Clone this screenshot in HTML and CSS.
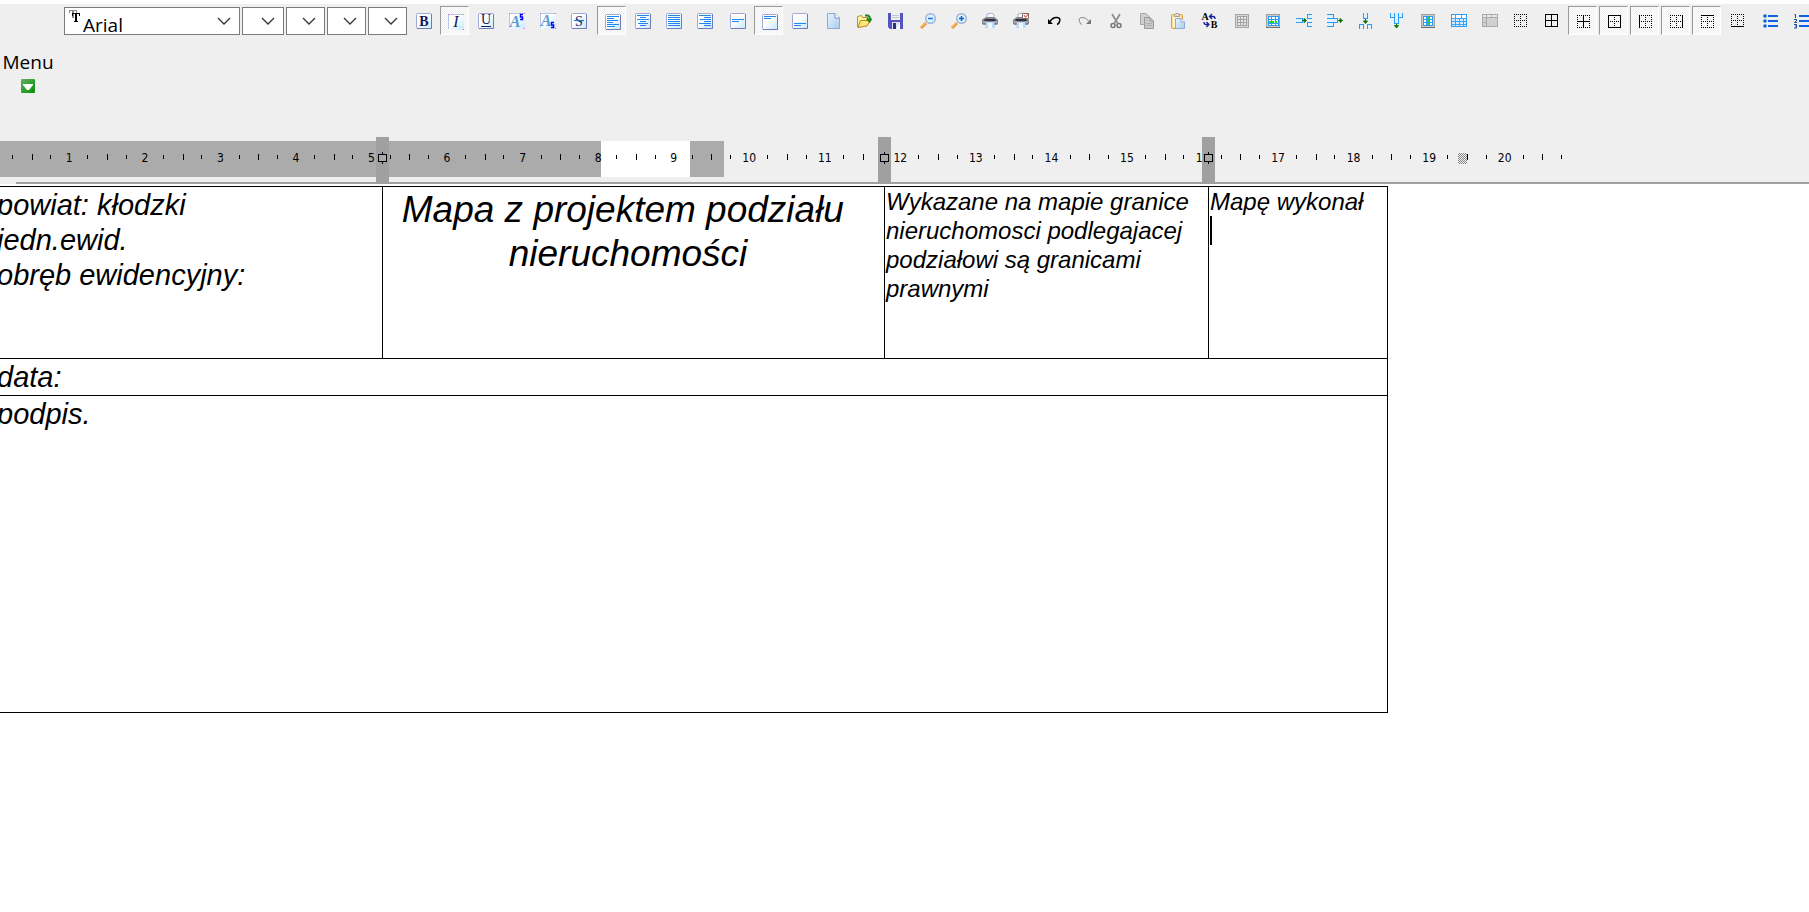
FILE: index.html
```html
<!DOCTYPE html>
<html lang="pl">
<head>
<meta charset="utf-8">
<title>Edytor tabeli</title>
<link rel="stylesheet" href="styles.css">
</head>
<body>
<svg class="defs" aria-hidden="true">
  <defs>
    <linearGradient id="sheen" x1="0" y1="0" x2="1" y2="1"><stop offset="0.4" stop-color="#fff"/><stop offset="1" stop-color="#c3e8fb"/></linearGradient>
    <linearGradient id="page" x1="0" y1="0" x2="1" y2="1"><stop offset="0" stop-color="#e9f3fc"/><stop offset="1" stop-color="#a9cdee"/></linearGradient>
    <linearGradient id="leaf" x1="0" y1="0" x2="1" y2="1"><stop offset="0" stop-color="#5fae5f"/><stop offset="1" stop-color="#0a8f0a"/></linearGradient>
    <g id="box"><rect x="0.5" y="0.5" width="15" height="15" rx="1" fill="url(#sheen)" stroke="#a3a9d6"/><path d="M1 15.5H15.5V1" fill="none" stroke="#7478b4"/></g>
    <g id="faint"><rect x="0" y="0" width="16" height="16" fill="url(#sheen)"/><path d="M1 .5H15M.5 1V15" stroke="#b9c6e6"/><path d="M0 0h1v1H0zM15 0h1v1h-1zM15 15h1v1h-1z" fill="#e25be0"/></g>
    <g id="dots" fill="none" stroke="#000" stroke-dasharray="1 1"><path d="M1 1.500H14M1 7.500H14M1 13.500H14M1.500 1V14M7.500 1V14M13.500 1V14"/></g>
    <g id="glass"><path d="M1 15L6 10" stroke="#ef9a3c" stroke-width="3"/><path d="M1 14L5 10" stroke="#ffc170"/><circle cx="10.500" cy="5.500" r="4.800" fill="#d8f3ff" stroke="#9db4dc" stroke-width="1.500"/></g>
    <g id="printer"><path d="M5 6V1l5-1 2 2v4z" fill="#f4f9ff" stroke="#98a3c4" stroke-width=".8"/><path d="M1 6l3-2h8l3 2 1 1v4l-2 1H2l-2-1V7z" fill="#85838f"/><path d="M3 6h10l1 2H2z" fill="#34323e"/><path d="M1 9h3M12 9h3" stroke="#c9c8d2"/><path d="M4 9h8l1 6H3z" fill="#b9dcf8"/><path d="M6 10h4v5H6z" fill="#eef8ff"/></g>
  </defs>
</svg>

<header class="panel">
  <div class="toolbar">
    <div class="combo combo-font">
      <svg class="combo-mark" viewBox="0 0 12 13" shape-rendering="crispEdges"><path d="M0 0h8v3H7V1H5v7H3V1H1v2H0z" fill="#8a8a8a"/><path d="M3 3h8v3h-1V4H8v7h1v1H5v-1h1V4H4v2H3z" fill="#000"/></svg>
      <select aria-label="Czcionka"><option>Arial</option></select>
      <svg class="chevron" viewBox="0 0 14 8"><path d="M1 1l6 6 6-6"/></svg>
    </div>
    <div class="combo combo-size"><select aria-label="Rozmiar"><option></option></select><svg class="chevron" viewBox="0 0 14 8"><path d="M1 1l6 6 6-6"/></svg></div>
    <div class="combo"><select aria-label="Kolor"><option></option></select><svg class="chevron" viewBox="0 0 14 8"><path d="M1 1l6 6 6-6"/></svg></div>
    <div class="combo"><select aria-label="Tło"><option></option></select><svg class="chevron" viewBox="0 0 14 8"><path d="M1 1l6 6 6-6"/></svg></div>
    <div class="combo"><select aria-label="Styl"><option></option></select><svg class="chevron" viewBox="0 0 14 8"><path d="M1 1l6 6 6-6"/></svg></div>

    <div class="group">
      <button class="tool" aria-label="Pogrubienie"><svg viewBox="0 0 16 16"><use href="#box"/><text x="8" y="13" class="glyph">B</text></svg></button>
      <button class="tool pressed" aria-label="Kursywa"><svg viewBox="0 0 16 16"><use href="#faint"/><text x="8" y="13" class="glyph slant plain">I</text></svg></button>
      <button class="tool" aria-label="Podkreślenie"><svg viewBox="0 0 16 16"><use href="#box"/><text x="8" y="11" class="glyph plain">U</text><path d="M3 13.500H13" stroke="#23235c"/></svg></button>
      <button class="tool" aria-label="Indeks górny"><svg viewBox="0 0 16 16"><use href="#faint"/><text x="6" y="14" class="glyph slant sky">A</text><path d="M14 1.500H11.500V4H13.500V6.500H11" class="five"/></svg></button>
      <button class="tool" aria-label="Indeks dolny"><svg viewBox="0 0 16 16"><use href="#faint"/><text x="6" y="13" class="glyph slant sky">A</text><path d="M14 9.500H11.500V12H13.500V14.500H11" class="five"/></svg></button>
      <button class="tool" aria-label="Przekreślenie"><svg viewBox="0 0 16 16"><use href="#box"/><text x="8" y="13" class="glyph plain">S</text><path d="M3 7.500H13" stroke="#1c7ac8" stroke-width="1.200"/></svg></button>
    </div>
    <div class="group">
      <button class="tool pressed" aria-label="Do lewej"><svg viewBox="0 0 16 16"><use href="#box"/><path class="lines" d="M2 2.500H14M2 4.500H9M2 6.500H13M2 8.500H8M2 10.500H14M2 12.500H10"/></svg></button>
      <button class="tool" aria-label="Do środka"><svg viewBox="0 0 16 16"><use href="#box"/><path class="lines" d="M2 2.500H14M5 4.500H11M2 6.500H14M5 8.500H11M3 10.500H13M5 12.500H11"/></svg></button>
      <button class="tool" aria-label="Wyjustuj"><svg viewBox="0 0 16 16"><use href="#box"/><path class="lines" d="M2 2.500H14M2 4.500H14M2 6.500H14M2 8.500H14M2 10.500H14M2 12.500H14"/></svg></button>
      <button class="tool" aria-label="Do prawej"><svg viewBox="0 0 16 16"><use href="#box"/><path class="lines" d="M2 2.500H14M7 4.500H14M3 6.500H14M7 8.500H14M2 10.500H14M7 12.500H14"/></svg></button>
    </div>
    <div class="group">
      <button class="tool" aria-label="Wyrównaj w pionie"><svg viewBox="0 0 16 16"><use href="#box"/><path class="lines" d="M2 6.500H14M2 8.500H9"/></svg></button>
      <button class="tool pressed" aria-label="Wyrównaj do góry"><svg viewBox="0 0 16 16"><use href="#box"/><path class="lines" d="M2 2.500H14M2 4.500H9"/></svg></button>
      <button class="tool" aria-label="Wyrównaj do dołu"><svg viewBox="0 0 16 16"><use href="#box"/><path class="lines" d="M2 10.500H14M2 12.500H9"/></svg></button>
    </div>
    <div class="group">
      <button class="tool" aria-label="Nowy"><svg viewBox="0 0 16 16"><path d="M2.500.500H10l4.500 4.500v10.500H2.500z" fill="url(#page)" stroke="#93aacd"/><path d="M10 .500V5h4.500" fill="#fff" stroke="#7f97be"/></svg></button>
      <button class="tool" aria-label="Otwórz"><svg viewBox="0 0 16 16"><path d="M1.500 14V3.500l4-1 1 2h5.500V7" fill="#fff3a6" stroke="#c0902a"/><path d="M2 14.500L4.500 7.500h10L11 13z" fill="#ffe678" stroke="#b8871f"/><path d="M9 2.500h2q3 0 3 4M11 5.500l2.500 3 2-3" fill="none" stroke="#1b8a1b" stroke-width="2"/></svg></button>
      <button class="tool" aria-label="Zapisz"><svg viewBox="0 0 16 16"><path d="M1 0h15v16H3l-2-2z" fill="#5454bd"/><path d="M4 0h9v7H4z" fill="#f0f0f0"/><path d="M5 2.500h7M5 4.500h7" stroke="#c4c4cc"/><path d="M5 9h8v7H5z" fill="#dfe1f4"/><path d="M6 10h3v6H6z" fill="#30307e"/><path d="M9 16l4-6v6z" fill="#fff"/></svg></button>
    </div>
    <div class="group">
      <button class="tool" aria-label="Pomniejsz"><svg viewBox="0 0 16 16"><use href="#glass"/><path d="M8 5.500h5" stroke="#2573c9" stroke-width="1.500"/></svg></button>
      <button class="tool" aria-label="Powiększ"><svg viewBox="0 0 16 16"><use href="#glass"/><path d="M8 5.500h5M10.500 3v5" stroke="#1261bd" stroke-width="1.500"/></svg></button>
      <button class="tool" aria-label="Drukuj"><svg viewBox="0 0 16 16"><use href="#printer"/></svg></button>
      <button class="tool" aria-label="Podgląd wydruku"><svg viewBox="0 0 16 16"><use href="#printer"/><path d="M9.500.500h6v5h-6z" fill="#fff" stroke="#8b6a6a"/><path d="M11 2l1.500 2.500L15.500.500" fill="none" stroke="#cf3a22"/></svg></button>
    </div>
    <div class="group">
      <button class="tool" aria-label="Cofnij"><svg viewBox="0 0 16 16"><path d="M4 8.500Q7 4 11 4.500t2.500 4Q13 11 11 11.500" fill="none" stroke="#000" stroke-width="1.500"/><path d="M2 6v5h5z"/></svg></button>
      <button class="tool" aria-label="Ponów"><svg viewBox="0 0 16 16"><path d="M12 8.500Q9 4 5 4.500t-2.500 4Q3 11 5 11.500" fill="none" stroke="#858585"/><path d="M14 6v5H9z" fill="#777"/></svg></button>
      <button class="tool" aria-label="Wytnij"><svg viewBox="0 0 16 16"><path d="M4 1l5.500 9M12 1L6.500 10" stroke="#8f8f8f" stroke-width="1.800"/><circle cx="5" cy="12.500" r="2" fill="none" stroke="#777" stroke-width="1.500"/><circle cx="11" cy="12.500" r="2" fill="none" stroke="#777" stroke-width="1.500"/></svg></button>
      <button class="tool" aria-label="Kopiuj"><svg viewBox="0 0 16 16"><path d="M1.500.500H7L10.500 4v7.500h-9z" fill="#d0d0d0" stroke="#a6a6a6"/><path d="M5.500 4.500H11L14.500 8v7.500h-9z" fill="#c9c9c9" stroke="#999"/><path d="M11 4.500V8h3.500" fill="none" stroke="#999"/><path d="M7 10.500h6M7 12.500h6" stroke="#b0b0b0"/></svg></button>
      <button class="tool" aria-label="Wklej"><svg viewBox="0 0 16 16"><rect x="1.500" y="1.500" width="11" height="14" rx="1" fill="#fbe09a" stroke="#d9a03c"/><path d="M3 4h8v10H3z" fill="#fff4cf"/><path d="M4.500 3.500V1.500L6 .500h2l1.500 1v2z" fill="#ddd" stroke="#a8a08c"/><path d="M5.500 5.500H11L14.500 9v6.500h-9z" fill="url(#page)" stroke="#8fa9d8"/><path d="M11 5.500V9h3.500" fill="#fff" stroke="#8fa9d8"/></svg></button>
      <button class="tool" aria-label="Zamień"><svg viewBox="0 0 16 16"><text x="4" y="7" class="glyph small">A</text><text x="13" y="15" class="glyph small">B</text><path d="M9 3.500h3q2 0 2 2.500M11 1L8.500 3.500 11 6M3 9q0 2.500 2 2.500h2M5.500 9L8 11.500 5.500 14" fill="none" stroke="#1a1a9c" stroke-width="1.300"/></svg></button>
    </div>
    <div class="group">
      <button class="tool" aria-label="Wstaw tabelę"><svg viewBox="0 0 16 16" shape-rendering="crispEdges"><path d="M1.500 1.500h13v13h-13z" fill="#d6d6d6" stroke="#a6a6a6"/><path d="M3.500 3.500h9v9h-9zM6.500 3.500v9M9.500 3.500v9M3.500 6.500h9M3.500 9.500h9" fill="#e8e8e8" stroke="#a0a0a0"/></svg></button>
      <button class="tool" aria-label="Wstaw wiersz"><svg viewBox="0 0 16 16" shape-rendering="crispEdges"><path d="M1.500 1.500h13v13h-13z" fill="#ccc" stroke="#a0a0a0"/><path d="M1 14.500h14" stroke="#707070"/><path d="M3.500 3.500h10v9h-10zM6.500 3v10M10.500 3v10M3 6.500h11M3 10.500h11" fill="#fff" stroke="#2a9cf5"/><path d="M4 8.500h9" stroke="#1ee01e" stroke-width="2" stroke-dasharray="2 1"/></svg></button>
      <button class="tool" aria-label="Scal w poziomie"><svg viewBox="0 0 16 16"><g class="cells"><path d="M0 5.500h6v4H0M16 1.500h-5v4h5M16 9.500h-5v4h5"/></g><path class="arrow" d="M6 7.500h4M8 5.500l2.500 2-2.500 2z"/></svg></button>
      <button class="tool" aria-label="Podziel w poziomie"><svg viewBox="0 0 16 16"><g class="cells"><path d="M0 1.500h6v4H0M0 9.500h6v4H0M0 5.500h10v4H0"/></g><path class="arrow" d="M11 7.500h3M13 5.500l2.500 2-2.500 2z"/></svg></button>
      <button class="tool" aria-label="Scal w pionie"><svg viewBox="0 0 16 16"><g class="cells"><path d="M5.500 0v5h4V0M1.500 16v-5h4v5M9.500 16v-5h4v5"/></g><path class="arrow" d="M7.500 6v2M5.500 8l2 2.500 2-2.500z"/></svg></button>
      <button class="tool" aria-label="Podziel w pionie"><svg viewBox="0 0 16 16"><g class="cells"><path d="M1.500 0v4h4V0M9.500 0v4h4V0M5.500 0v10h4V0"/></g><path class="arrow" d="M7.500 11v2M5.500 12.500l2 2.500 2-2.500z"/></svg></button>
      <button class="tool" aria-label="Wstaw kolumnę"><svg viewBox="0 0 16 16" shape-rendering="crispEdges"><path d="M1.500 1.500h13v13h-13z" fill="#ccc" stroke="#a0a0a0"/><path d="M1 14.500h14" stroke="#707070"/><path d="M3.500 3.500h9v9h-9zM6.500 3v10M9.500 3v10M3 6.500h10M3 9.500h10" fill="#fff" stroke="#2a9cf5"/><path d="M8 4v9" stroke="#1ee01e" stroke-width="2" stroke-dasharray="2 1"/></svg></button>
      <button class="tool" aria-label="Tabela"><svg viewBox="0 0 16 16" shape-rendering="crispEdges"><path d="M.500 1.500h15v12H.500z" fill="#d3ecff" stroke="#2a9cf5"/><path d="M1 2h14v3H1z" fill="#fff"/><path d="M0 5.500h16M4.500 1v13M8.500 5v9M12.500 5v9M10.500 1v4M0 8.500h16M0 11.500h16" stroke="#3aa4f5"/></svg></button>
      <button class="tool" aria-label="Usuń tabelę"><svg viewBox="0 0 16 16" shape-rendering="crispEdges"><path d="M.500 1.500h15v12H.500z" fill="#d0d0d0" stroke="#aaa"/><path d="M1 2h14v3H1z" fill="#ececec"/><path d="M0 4.500h16M4.500 1v13M9.500 1v4M0 9.500h4" stroke="#aaa"/></svg></button>
      <button class="tool" aria-label="Bez obramowania"><svg viewBox="0 0 16 16"><use href="#dots"/></svg></button>
      <button class="tool" aria-label="Pełne obramowanie"><svg viewBox="0 0 16 16"><path class="rule" d="M1.500 1.500h12v12h-12zM7.500 1v13M1 7.500h13"/></svg></button>
      <button class="tool pressed" aria-label="Obramowanie wewnętrzne"><svg viewBox="0 0 16 16"><use href="#dots"/><path class="rule" d="M7.500 1v13M1 7.500h13"/></svg></button>
      <button class="tool pressed" aria-label="Obramowanie zewnętrzne"><svg viewBox="0 0 16 16"><use href="#dots"/><path class="rule" d="M1.500 1.500h12v12h-12z"/></svg></button>
      <button class="tool pressed" aria-label="Obramowanie lewe"><svg viewBox="0 0 16 16"><use href="#dots"/><path class="rule" d="M1.500 1v13"/></svg></button>
      <button class="tool pressed" aria-label="Obramowanie prawe"><svg viewBox="0 0 16 16"><use href="#dots"/><path class="rule" d="M13.500 1v13"/></svg></button>
      <button class="tool pressed" aria-label="Obramowanie górne"><svg viewBox="0 0 16 16"><use href="#dots"/><path class="rule" d="M1 1.500h13"/></svg></button>
      <button class="tool" aria-label="Obramowanie dolne"><svg viewBox="0 0 16 16"><use href="#dots"/><path class="rule" d="M1 13.500h13"/></svg></button>
    </div>
    <div class="group">
      <button class="tool" aria-label="Wypunktowanie"><svg viewBox="0 0 16 16"><path class="bars" d="M5 3h10M5 8h10M5 13h10"/><g fill="#1263e0"><circle cx="2" cy="3" r="1.800"/><circle cx="2" cy="8" r="1.800"/><circle cx="2" cy="13" r="1.800"/></g></svg></button>
      <button class="tool" aria-label="Numerowanie"><svg viewBox="0 0 16 16"><path class="bars" d="M5 3h11M5 8h11M5 13h11"/><path d="M.500 1.500h1V5M0 6.500h2.500v1.500L.500 9.500H3M0 11.500h2.500v3.500H0M1 13h1" fill="none" stroke="#0e4a9c"/></svg></button>
    </div>
  </div>

  <button class="menu">
    <span>Menu</span>
    <svg class="menu-mark" viewBox="0 0 14 14"><rect width="14" height="14" rx="1" fill="url(#leaf)"/><path d="M2 5h10v1L8 11H6L2 6z" fill="#fff"/></svg>
  </button>

  <div class="ruler">
    <div class="band shade before"></div>
    <div class="band clear"></div>
    <div class="band shade after"></div>
    <ol class="scale">
      <li></li><li>1</li><li>2</li><li>3</li><li>4</li><li>5</li><li>6</li><li>7</li><li>8</li><li>9</li><li>10</li><li>11</li><li>12</li><li>13</li><li>14</li><li>15</li><li>16</li><li>17</li><li>18</li><li>19</li><li>20</li><li class="last"></li>
    </ol>
    <svg class="handle first" viewBox="0 0 13 45" shape-rendering="crispEdges"><path d="M0 0h13v45H0z" fill="#a0a0a0"/><path d="M2.500 17.500h8v7h-8zM6.500 15v2M6.500 25v2" fill="#aaa" stroke="#000"/></svg>
    <svg class="handle second" viewBox="0 0 13 45" shape-rendering="crispEdges"><path d="M0 0h13v45H0z" fill="#a0a0a0"/><path d="M2.500 17.500h8v7h-8zM6.500 15v2M6.500 25v2" fill="#aaa" stroke="#000"/></svg>
    <svg class="handle third" viewBox="0 0 13 45" shape-rendering="crispEdges"><path d="M0 0h13v45H0z" fill="#a0a0a0"/><path d="M2.500 17.500h8v7h-8zM6.500 15v2M6.500 25v2" fill="#aaa" stroke="#000"/></svg>
    <div class="margin-mark"></div>
  </div>
  <div class="edge"></div>
</header>

<main class="document">
  <table class="sheet">
    <colgroup><col class="c1"><col class="c2"><col class="c3"><col class="c4"></colgroup>
    <tr class="head">
      <td>powiat: kłodzki<br>jedn.ewid.<br>obręb ewidencyjny:</td>
      <td class="title">Mapa z projektem podziału&nbsp;<br>nieruchomości</td>
      <td class="note">Wykazane na mapie granice<br>nieruchomosci podlegajacej<br>podziałowi są granicami<br>prawnymi</td>
      <td class="note">Mapę wykonał<br><span class="caret"></span></td>
    </tr>
    <tr class="date"><td colspan="4">data:</td></tr>
    <tr class="sign"><td colspan="4">podpis.</td></tr>
  </table>
</main>
</body>
</html>
```
FILE: styles.css
```css
* { box-sizing: border-box; }

body {
  margin: 0;
  background: #fff;
  color: #000;
  font-family: "Open Sans", "Noto Sans", sans-serif;
  font-size: 19px;
  overflow: hidden;
}

.defs { position: absolute; width: 0; height: 0; }

.panel {
  border-top: 4px solid #fff;
  padding-top: 2px;
  background: #efefef;
}

.toolbar {
  display: flex;
  gap: 2px;
  height: 29px;
  padding-left: 64px;
}

.combo {
  position: relative;
  flex: none;
  width: 39px;
  height: 28px;
  margin-top: 1px;
}
.combo-font { width: 176px; }
.combo-size { width: 42px; }

.combo select {
  display: block;
  width: 100%;
  height: 28px;
  appearance: none;
  border: 1px solid #7a7a7a;
  border-radius: 0;
  background: #fff;
  color: #000;
  font: inherit;
  line-height: 24px;
  padding: 5px 0 1px 18px;
}

.combo-mark {
  position: absolute;
  left: 5px;
  top: 3px;
  width: 12px;
  height: 13px;
}

.chevron {
  position: absolute;
  right: 9px;
  top: 10px;
  width: 14px;
  height: 8px;
  fill: none;
  stroke: #333;
  stroke-width: 1.3;
  pointer-events: none;
}

.group {
  display: flex;
  flex: none;
  gap: 2px;
  padding-right: 2px;
}

.tool {
  flex: none;
  width: 29px;
  height: 29px;
  border: 0;
  padding: 7px 6px 6px 7px;
  background: none;
  line-height: 0;
  text-align: left;
}
.tool svg { display: block; width: 16px; height: 16px; overflow: visible; }

.tool.pressed {
  border: 1px solid #fff;
  border-top-color: #999;
  border-left-color: #999;
  padding: 7px 4px 4px 7px;
  background: repeating-conic-gradient(#efefef 0 25%, #fff 0 50%) 0 0 / 2px 2px;
}

.glyph {
  font-family: "Liberation Serif", serif;
  font-size: 14px;
  font-weight: 700;
  text-anchor: middle;
  fill: #15155a;
}
.glyph.plain { font-weight: 400; }
.glyph.slant { font-style: italic; font-size: 16px; }
.glyph.sky { fill: #5a9bd0; }
.glyph.small { font-size: 10px; fill: #000; }
.five { fill: none; stroke: #00f; stroke-width: 1.5; }
.lines { stroke: #1c86f2; }
.bars { stroke: #0e62e6; stroke-width: 2; }
.cells { fill: #dff0ff; stroke: #2a9cf5; shape-rendering: crispEdges; }
.arrow { fill: #077a07; stroke: #077a07; }
.rule { fill: none; stroke: #000; shape-rendering: crispEdges; }

.menu {
  display: flex;
  flex-direction: column;
  align-items: center;
  gap: 5px;
  width: 56px;
  margin-top: 15px;
  border: 0;
  padding: 0;
  background: none;
  color: #000;
  font: inherit;
  line-height: 24px;
}
.menu-mark { width: 14px; height: 14px; }

.ruler {
  position: relative;
  display: flex;
  height: 36px;
  margin-top: 48px;
  margin-bottom: 5px;
}
.band { flex: none; }
.shade { background: #ababab; }
.clear { background: #fff; width: 89px; }
.before { width: 601px; }
.after { width: 34px; }

.scale {
  position: absolute;
  left: -44px;
  top: 0;
  display: grid;
  grid-template-columns: repeat(22, 1fr);
  width: 1662px;
  height: 36px;
  margin: 0;
  padding: 0;
  list-style: none;
  font-family: "DejaVu Sans Condensed", "DejaVu Sans", sans-serif;
  font-size: 12px;
  line-height: 34px;
  text-align: center;
}
.scale li {
  background:
    linear-gradient(#000, #000) 0 13px / 1px 6px no-repeat,
    linear-gradient(#000, #000) 25% 14px / 1px 4px no-repeat,
    linear-gradient(#000, #000) 75% 14px / 1px 4px no-repeat;
}
.scale .last { background-size: 1px 6px, 1px 4px, 0 0; }

.handle {
  position: absolute;
  top: -4px;
  width: 13px;
  height: 45px;
}
.first { left: 376px; }
.second { left: 878px; }
.third { left: 1202px; }

.margin-mark {
  position: absolute;
  left: 1458px;
  top: 12px;
  width: 9px;
  height: 11px;
  background: repeating-conic-gradient(#888 0 25%, #efefef 0 50%) 0 0 / 2px 2px;
}

.edge {
  height: 2px;
  margin-left: 16px;
  background: #a0a0a0;
}

.document { padding-top: 2px; }

.sheet {
  width: 1392px;
  margin-left: -5px;
  border-collapse: collapse;
  table-layout: fixed;
  font-family: "Liberation Sans", Arial, sans-serif;
  font-style: italic;
  font-size: 29px;
  line-height: 35px;
}
.c1 { width: 387px; }
.c2 { width: 502px; }
.c3 { width: 324px; }
.c4 { width: 179px; }

.sheet td {
  border: 1px solid #000;
  padding: 1px 1px 0;
  vertical-align: top;
  white-space: nowrap;
}
.head { height: 172px; }
.date { height: 37px; }
.sign { height: 317px; }

.sheet .title {
  padding-right: 12px;
  font-size: 37px;
  line-height: 44px;
  text-align: center;
}
.sheet .note {
  font-size: 24px;
  line-height: 29px;
  padding: 0 1px;
}
.caret {
  display: inline-block;
  width: 2px;
  height: 29px;
  background: #000;
  vertical-align: top;
}
```
